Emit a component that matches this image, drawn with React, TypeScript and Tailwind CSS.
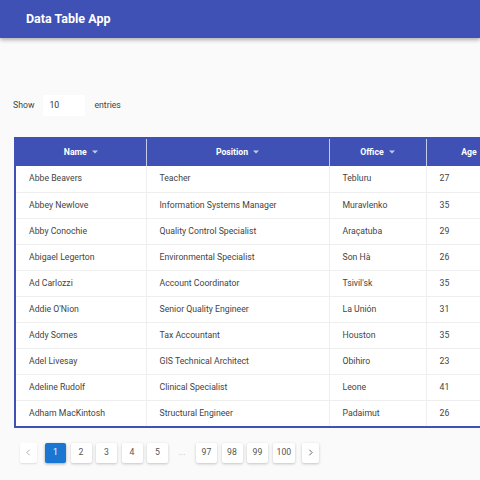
import React from "react";

const rows: [string, string, string, string][] = [
  ["Abbe Beavers", "Teacher", "Tebluru", "27"],
  ["Abbey Newlove", "Information Systems Manager", "Muravlenko", "35"],
  ["Abby Conochie", "Quality Control Specialist", "Araçatuba", "29"],
  ["Abigael Legerton", "Environmental Specialist", "Son Hà", "26"],
  ["Ad Carlozzi", "Account Coordinator", "Tsivil'sk", "35"],
  ["Addie O'Nion", "Senior Quality Engineer", "La Unión", "31"],
  ["Addy Somes", "Tax Accountant", "Houston", "35"],
  ["Adel Livesay", "GIS Technical Architect", "Obihiro", "23"],
  ["Adeline Rudolf", "Clinical Specialist", "Leone", "41"],
  ["Adham MacKintosh", "Structural Engineer", "Padaimut", "26"],
];

function Caret() {
  return (
    <svg width="6" height="4" viewBox="0 0 6 4" className="ml-[5px] inline-block" fill="rgba(255,255,255,0.7)">
      <path d="M0 0.5h6L3 3.5z" />
    </svg>
  );
}

function HeadCell({ label, caret = true, last = false }: { label: string; caret?: boolean; last?: boolean }) {
  return (
    <th className={`h-[28px] p-0 font-bold text-white text-[8.7px] ${last ? "" : "border-r border-[#c5cae9]"}`}>
      <span className="inline-flex items-center justify-center">
        {label}
        {caret && <Caret />}
      </span>
    </th>
  );
}

function PageBtn({ children, active = false }: { children: React.ReactNode; active?: boolean }) {
  return (
    <div
      className={`h-[20px] min-w-[21px] px-[4px] flex items-center justify-center rounded-[2px] text-[8.7px] ${
        active
          ? "bg-[#1976d2] text-white shadow-[0_1px_3px_rgba(0,0,0,0.35)]"
          : "bg-white text-[#555] shadow-[0_1px_3px_rgba(0,0,0,0.22)]"
      }`}
    >
      {children}
    </div>
  );
}

function Chevron({ dir }: { dir: "left" | "right" }) {
  return (
    <svg width="11" height="11" viewBox="0 0 24 24" fill="none" stroke={dir === "left" ? "#aaaaaa" : "#555"} strokeWidth="2">
      <path d={dir === "left" ? "M14.5 6l-6 6 6 6" : "M9.5 6l6 6-6 6"} />
    </svg>
  );
}

export default function App() {
  return (
    <div className="w-[480px] h-[480px] overflow-hidden bg-[#fafafa]" style={{ fontFamily: "Roboto, 'Noto Sans', sans-serif" }}>
      <div className="h-[38px] bg-[#3f51b5] flex items-center pl-[26px] shadow-[0_2px_4px_rgba(0,0,0,0.3)] relative z-10">
        <span className="text-white font-bold text-[12.5px]">Data Table App</span>
      </div>

      <div className="pt-[57px] pl-[14px]">
        <div className="flex items-center h-[21px] text-[8.7px] text-[#444] -ml-[1px]">
          <span>Show</span>
          <div className="ml-[9px] w-[42px] h-[21px] bg-white flex items-center pl-[6px] text-[#333]">10</div>
          <span className="ml-[9px]">entries</span>
        </div>

        <div className="mt-[21px] w-[800px]">
          <table className="border-collapse table-fixed border-2 border-[#3f51b5] w-[720px]">
            <colgroup>
              <col className="w-[131px]" />
              <col className="w-[183px]" />
              <col className="w-[97px]" />
              <col className="w-[97px]" />
              <col className="w-[110px]" />
              <col className="w-[100px]" />
            </colgroup>
            <thead>
              <tr className="bg-[#3f51b5]">
                <HeadCell label="Name" />
                <HeadCell label="Position" />
                <HeadCell label="Office" />
                <HeadCell label="Age" />
                <HeadCell label="Start date" />
                <HeadCell label="Salary" last />
              </tr>
            </thead>
            <tbody>
              {rows.map((r, i) => (
                <tr key={i} className={`bg-white ${i < rows.length - 1 ? "border-b border-[#eeeeee]" : ""}`}>
                  {r.map((c, j) => (
                    <td key={j} className="h-[26.1px] p-0 pl-[13px] text-[8.7px] text-[#444] border-r border-[#eeeeee] whitespace-nowrap">
                      {c}
                    </td>
                  ))}
                  <td className="h-[26.1px] p-0 border-r border-[#eeeeee]" />
                  <td className="h-[26.1px] p-0" />
                </tr>
              ))}
            </tbody>
          </table>
        </div>

        <div className="mt-[15px] flex items-center pl-[6px]">
          <div className="h-[20px] w-[17px] bg-white rounded-[2px] shadow-[0_1px_2px_rgba(0,0,0,0.12)] flex items-center justify-center">
            <Chevron dir="left" />
          </div>
          <div className="flex items-center gap-[4.5px] ml-[8px]">
            <PageBtn active>1</PageBtn>
            <PageBtn>2</PageBtn>
            <PageBtn>3</PageBtn>
            <PageBtn>4</PageBtn>
            <PageBtn>5</PageBtn>
            <div className="w-[19px] h-[20px] flex items-center justify-center text-[8.7px] text-[#bbb]">...</div>
            <PageBtn>97</PageBtn>
            <PageBtn>98</PageBtn>
            <PageBtn>99</PageBtn>
            <PageBtn>100</PageBtn>
          </div>
          <div className="ml-[7px] h-[20px] w-[17px] bg-white rounded-[2px] shadow-[0_1px_3px_rgba(0,0,0,0.22)] flex items-center justify-center">
            <Chevron dir="right" />
          </div>
        </div>
      </div>
    </div>
  );
}
